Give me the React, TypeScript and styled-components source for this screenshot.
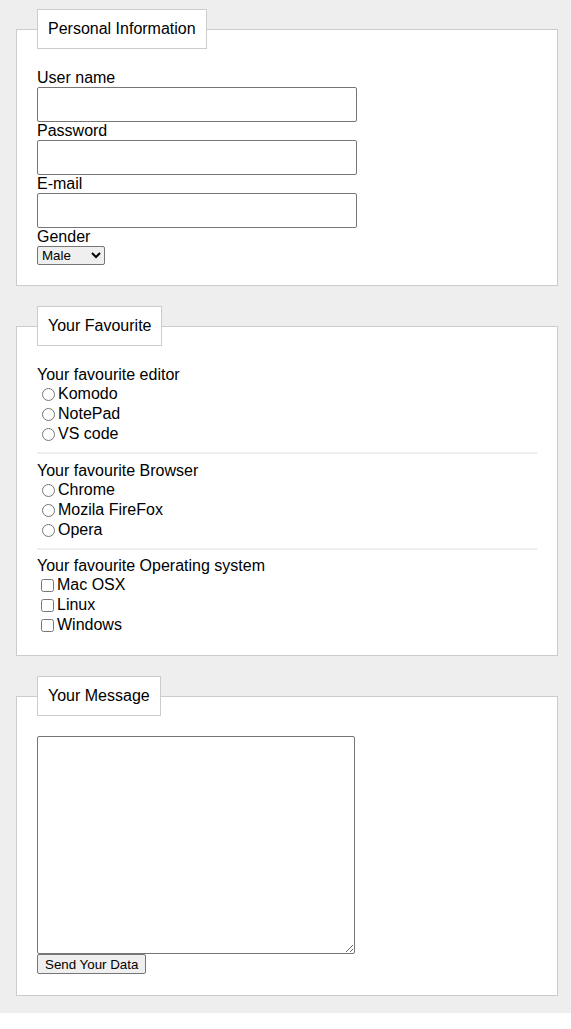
import React, { useState } from "react";
import styled, { createGlobalStyle } from "styled-components";

const GlobalStyle = createGlobalStyle`
  html, body {
    margin: 0;
    padding: 0;
    background: #fff;
  }
  body {
    font-family: "Liberation Sans", Arial, sans-serif;
    font-size: 16px;
    color: #000;
  }
`;

const Page = styled.form`
  display: flex;
  flex-direction: column;
  gap: 20px;
  padding: 9px 13px 17px 16px;
  background: #eee;
`;

const Box = styled.fieldset`
  margin: 0;
  min-width: 0;
  padding: 20px;
  border: 1px solid #ccc;
  background: #fff;
`;

const Legend = styled.legend`
  padding: 10px;
  line-height: 18px;
  border: 1px solid #ccc;
  background: #fff;
`;

const FieldLabel = styled.label`
  display: block;
  line-height: 18px;
`;

const TextInput = styled.input`
  display: block;
  box-sizing: border-box;
  width: 320px;
  height: 35px;
  margin: 0;
  border: 1px solid #767676;
  border-radius: 2px;
  font: inherit;
`;

const Select = styled.select`
  display: block;
  box-sizing: border-box;
  width: 68px;
  height: 19px;
  margin: 0;
  font-family: "Liberation Sans", Arial, sans-serif;
  font-size: 13.333px;
  border: 1px solid #767676;
  border-radius: 2px;
`;

const GroupTitle = styled.div`
  line-height: 18px;
`;

const Row = styled.label`
  display: flex;
  align-items: center;
  height: 20px;
`;

const Check = styled.input<{ $box?: boolean }>`
  width: 13px;
  height: 13px;
  margin: ${({ $box }) => ($box ? "1px 3px 0 4px" : "1px 3px 0 5px")};
`;

const Divider = styled.hr`
  height: 2px;
  margin: 8px 0 7.5px;
  border: none;
  background: #eee;
`;

const Message = styled.textarea`
  display: block;
  box-sizing: border-box;
  width: 318px;
  height: 218px;
  margin: 0;
  border: 1px solid #767676;
  border-radius: 2px;
`;

const ButtonRow = styled.div`
  height: 21px;
`;

const SendButton = styled.button`
  box-sizing: border-box;
  height: 20px;
  padding: 0 7px;
  font-family: "Liberation Sans", Arial, sans-serif;
  font-size: 13.333px;
  color: #000;
  background: #efefef;
  border: 1px solid #767676;
  border-radius: 2px;
`;

const groups = [
  { title: "Your favourite editor", name: "editor", type: "radio", items: ["Komodo", "NotePad", "VS code"] },
  { title: "Your favourite Browser", name: "browser", type: "radio", items: ["Chrome", "Mozila FireFox", "Opera"] },
  { title: "Your favourite Operating system", name: "os", type: "checkbox", items: ["Mac OSX", "Linux", "Windows"] },
];

export default function App() {
  const [gender, setGender] = useState("male");

  return (
    <>
      <GlobalStyle />
      <Page onSubmit={(e) => e.preventDefault()}>
        <Box>
          <Legend>Personal Information</Legend>
          <FieldLabel htmlFor="username">User name</FieldLabel>
          <TextInput id="username" type="text" />
          <FieldLabel htmlFor="password">Password</FieldLabel>
          <TextInput id="password" type="password" />
          <FieldLabel htmlFor="email">E-mail</FieldLabel>
          <TextInput id="email" type="email" />
          <FieldLabel htmlFor="gender">Gender</FieldLabel>
          <Select id="gender" value={gender} onChange={(e) => setGender(e.target.value)}>
            <option value="male">Male</option>
            <option value="female">Female</option>
          </Select>
        </Box>

        <Box>
          <Legend>Your Favourite</Legend>
          {groups.map((group, i) => (
            <React.Fragment key={group.name}>
              {i > 0 && <Divider />}
              <GroupTitle>{group.title}</GroupTitle>
              {group.items.map((item) => (
                <Row key={item}>
                  <Check type={group.type} name={group.name} $box={group.type === "checkbox"} />
                  {item}
                </Row>
              ))}
            </React.Fragment>
          ))}
        </Box>

        <Box>
          <Legend>Your Message</Legend>
          <Message />
          <ButtonRow>
            <SendButton type="submit">Send Your Data</SendButton>
          </ButtonRow>
        </Box>
      </Page>
    </>
  );
}
